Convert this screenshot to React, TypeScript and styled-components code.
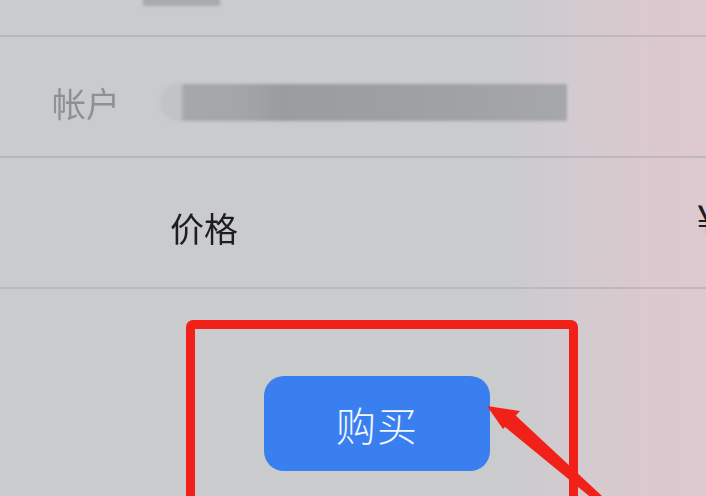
import React from 'react';
import styled, { createGlobalStyle } from 'styled-components';

const GlobalStyle = createGlobalStyle`
  html, body {
    margin: 0;
    padding: 0;
    overflow: hidden;
  }
  body {
    font-family: 'Noto Sans CJK SC', 'Noto Sans', sans-serif;
  }
`;

const Sheet = styled.div`
  position: relative;
  width: 706px;
  height: 496px;
  overflow: hidden;
  display: flex;
  flex-direction: column;
  background: linear-gradient(
    90deg,
    #cacbcd 0%,
    #cacbcd 72%,
    #d3cbcf 82%,
    #dbc9cf 92%,
    #ddc9cf 100%
  );
`;

const Row = styled.div<{ h: number; pl: number; shift?: number }>`
  flex: 0 0 auto;
  height: ${p => p.h}px;
  display: flex;
  align-items: center;
  padding-left: ${p => p.pl}px;
  padding-top: ${p => p.shift || 0}px;
  border-bottom: 2px solid rgba(170, 170, 174, 0.55);
  box-sizing: border-box;
`;

const TopRow = styled(Row)`
  align-items: flex-start;
`;

const Label = styled.span<{ muted?: boolean }>`
  font-size: 34px;
  line-height: 1;
  color: ${p => (p.muted ? '#8f9093' : '#1e1e20')};
  filter: blur(0.4px);
`;

const Blurred = styled.div<{ w: number; h: number }>`
  width: ${p => p.w}px;
  height: ${p => p.h}px;
  filter: blur(1.5px);
`;

const TopBlur = styled(Blurred)`
  margin-top: -4px;
  background: #a9aaac;
`;

const AccountBlur = styled(Blurred)`
  margin-left: 40px;
  border-radius: 18px 0 0 18px;
  background: linear-gradient(
    90deg,
    #c2c3c5 0%,
    #c2c3c5 5%,
    #a6a7a9 6%,
    #a4a5a7 20%,
    #9b9c9e 30%,
    #9d9ea0 50%,
    #a0a1a3 70%,
    #a6a7a9 100%
  );
`;

const Price = styled.span`
  margin-left: auto;
  margin-right: -13px;
  margin-bottom: 22px;
  font-size: 40px;
  color: #1e1e20;
  line-height: 1;
`;

const ActionArea = styled.div`
  flex: 1;
  padding-top: 31px;
  padding-left: 186px;
`;

const Highlight = styled.div`
  width: 392px;
  height: 220px;
  box-sizing: border-box;
  border: 9px solid #f1211a;
  border-radius: 7px;
  display: flex;
  justify-content: center;
  padding-top: 47px;
  padding-right: 10px;
`;

const BuyButton = styled.button`
  width: 226px;
  height: 95px;
  border: none;
  border-radius: 20px;
  background: #3a7ff0;
  color: #f4f7fd;
  font-family: 'Noto Sans CJK SC', sans-serif;
  font-size: 40px;
  font-weight: 300;
  letter-spacing: 1px;
  cursor: pointer;
`;

const Annotation = styled.svg`
  position: absolute;
  left: 0;
  top: 0;
  pointer-events: none;
`;

export default function App() {
  return (
    <>
      <GlobalStyle />
      <Sheet>
        <TopRow h={37} pl={143}>
          <TopBlur w={77} h={10} />
        </TopRow>
        <Row h={121} pl={52} shift={12}>
          <Label muted>帐户</Label>
          <AccountBlur w={407} h={37} />
        </Row>
        <Row h={131} pl={170} shift={10}>
          <Label>价格</Label>
          <Price>¥</Price>
        </Row>
        <ActionArea>
          <Highlight>
            <BuyButton>购买</BuyButton>
          </Highlight>
        </ActionArea>
        <Annotation width={706} height={496} viewBox="0 0 706 496">
          <path d="M487 406 L520 411 L503 429 Z" fill="#f1211a" />
          <path d="M499 422 L513 413 L602 496 L594 500 Z" fill="#f1211a" />
        </Annotation>
      </Sheet>
    </>
  );
}
